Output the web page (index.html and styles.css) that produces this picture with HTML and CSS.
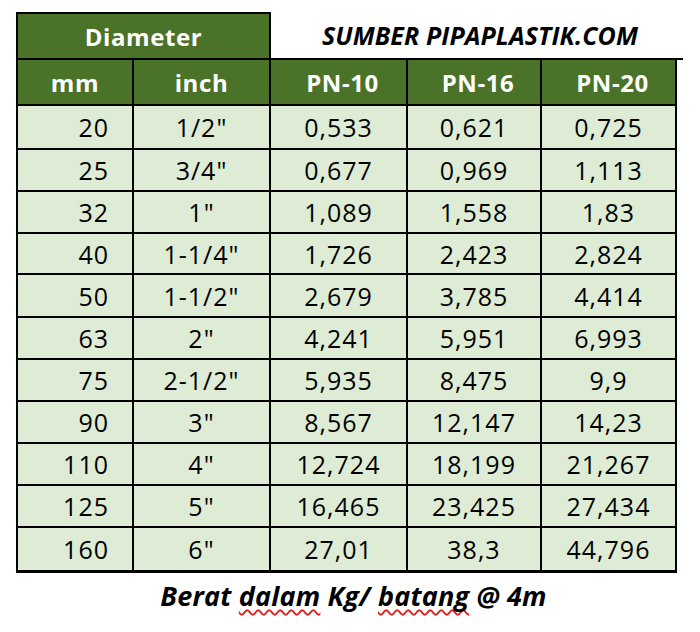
FILE: index.html
```html
<!DOCTYPE html>
<html lang="id">
<head>
<meta charset="utf-8">
<title>Berat Pipa PVC</title>
<link rel="stylesheet" href="styles.css">
</head>
<body>
<div class="sheet">
  <div class="grid">
    <div class="cell head diam">Diameter</div>
    <div class="cell brand">SUMBER PIPAPLASTIK.COM</div>

    <div class="cell head first">mm</div>
    <div class="cell head">inch</div>
    <div class="cell head pn">PN-10</div>
    <div class="cell head pn">PN-16</div>
    <div class="cell head pn">PN-20</div>

    <div class="cell data first mm">20</div><div class="cell data">1/2"</div><div class="cell data">0,533</div><div class="cell data">0,621</div><div class="cell data">0,725</div>
    <div class="cell data first mm">25</div><div class="cell data">3/4"</div><div class="cell data">0,677</div><div class="cell data">0,969</div><div class="cell data">1,113</div>
    <div class="cell data first mm">32</div><div class="cell data">1"</div><div class="cell data">1,089</div><div class="cell data">1,558</div><div class="cell data">1,83</div>
    <div class="cell data first mm">40</div><div class="cell data">1-1/4"</div><div class="cell data">1,726</div><div class="cell data">2,423</div><div class="cell data">2,824</div>
    <div class="cell data first mm">50</div><div class="cell data">1-1/2"</div><div class="cell data">2,679</div><div class="cell data">3,785</div><div class="cell data">4,414</div>
    <div class="cell data first mm">63</div><div class="cell data">2"</div><div class="cell data">4,241</div><div class="cell data">5,951</div><div class="cell data">6,993</div>
    <div class="cell data first mm">75</div><div class="cell data">2-1/2"</div><div class="cell data">5,935</div><div class="cell data">8,475</div><div class="cell data">9,9</div>
    <div class="cell data first mm">90</div><div class="cell data">3"</div><div class="cell data">8,567</div><div class="cell data">12,147</div><div class="cell data">14,23</div>
    <div class="cell data first mm">110</div><div class="cell data">4"</div><div class="cell data">12,724</div><div class="cell data">18,199</div><div class="cell data">21,267</div>
    <div class="cell data first mm">125</div><div class="cell data">5"</div><div class="cell data">16,465</div><div class="cell data">23,425</div><div class="cell data">27,434</div>
    <div class="cell data first mm last">160</div><div class="cell data last">6"</div><div class="cell data last">27,01</div><div class="cell data last">38,3</div><div class="cell data last end">44,796</div>
  </div>
  <p class="caption">Berat <span class="typo">dalam</span> Kg/ <span class="typo">batang</span> @ 4m</p>
</div>
</body>
</html>
```

FILE: styles.css
```css
* { box-sizing: border-box; }

html, body {
  margin: 0;
  padding: 0;
  background: #ffffff;
}

body {
  font-family: "Open Sans", "Noto Sans", "DejaVu Sans", sans-serif;
  color: #000;
}

.sheet {
  width: 700px;
  height: 632px;
  padding: 12px 0 0 16px;
}

.grid {
  display: grid;
  width: 661px;
  grid-template-columns: 118px 137px 137px 134px 135px;
  grid-template-rows: 48px 46px 44px 42px 42px 41px 43px 42px 42px 42px 42px 42px 45px;
}

.cell {
  display: flex;
  align-items: center;
  justify-content: center;
  border-right: 2px solid #000;
  border-bottom: 2px solid #000;
  white-space: nowrap;
}

.first { border-left: 2px solid #000; }

.head {
  background: #4b7229;
  color: #ffffff;
  font-weight: 700;
  font-size: 24px;
  letter-spacing: 0.6px;
}

.diam {
  grid-column: 1 / span 2;
  border-top: 2px solid #000;
  border-left: 2px solid #000;
}

.brand {
  grid-column: 3 / span 3;
  border-right: none;
  margin-right: -6px;
  font-weight: 700;
  font-style: italic;
  font-size: 25px;
  letter-spacing: 0.1px;
  padding-left: 6px;
}

.pn { padding-left: 8px; }

.data {
  background: #deecd5;
  font-size: 25px;
  letter-spacing: 1px;
}

.mm {
  justify-content: flex-end;
  padding-right: 23px;
}

.last { border-bottom-width: 3px; }

.caption {
  margin: 5px 0 0 0;
  width: 675px;
  text-align: center;
  font-weight: 700;
  font-style: italic;
  font-size: 27px;
  letter-spacing: 0.2px;
  line-height: 36px;
}

.typo {
  text-decoration: underline wavy #e0201a;
  text-decoration-thickness: 1.5px;
  text-underline-offset: 3px;
  text-decoration-skip-ink: none;
}
```
